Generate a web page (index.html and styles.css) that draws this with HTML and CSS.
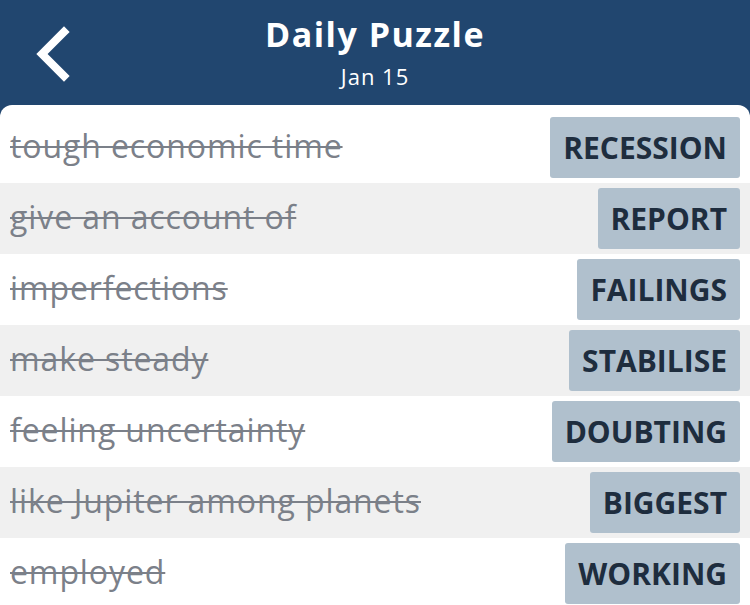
FILE: index.html
```html
<!DOCTYPE html>
<html lang="en">
<head>
    <meta charset="UTF-8">
    <meta name="viewport" content="width=device-width, initial-scale=1.0">
    <title>Daily Puzzle</title>
    <link rel="stylesheet" href="styles.css">
</head>
<body>
    <!-- Top Bar -->
    <header class="topbar">
        <a class="back-btn" href="#">
            <svg width="40" height="56" viewBox="0 0 40 56">
                <path d="M34 6 L12 28 L34 50" fill="none" stroke="#fff" stroke-width="8" stroke-linecap="square"/>
            </svg>
        </a>
        <div class="title-block">
            <h1>Daily Puzzle</h1>
            <div class="date">Jan 15</div>
        </div>
    </header>

    <!-- Clue List -->
    <main class="panel">
        <div class="row">
            <span class="clue">tough economic time</span>
            <span class="answer">RECESSION</span>
        </div>
        <div class="row">
            <span class="clue">give an account of</span>
            <span class="answer">REPORT</span>
        </div>
        <div class="row">
            <span class="clue">imperfections</span>
            <span class="answer">FAILINGS</span>
        </div>
        <div class="row">
            <span class="clue">make steady</span>
            <span class="answer">STABILISE</span>
        </div>
        <div class="row">
            <span class="clue">feeling uncertainty</span>
            <span class="answer">DOUBTING</span>
        </div>
        <div class="row">
            <span class="clue">like Jupiter among planets</span>
            <span class="answer">BIGGEST</span>
        </div>
        <div class="row">
            <span class="clue">employed</span>
            <span class="answer">WORKING</span>
        </div>
    </main>
</body>
</html>
```

FILE: styles.css
```css
/* General Page Styling */
body {
    margin: 0;
    font-family: "Open Sans", Lato, Arial, sans-serif;
    background: #21466f;
    height: 100vh;
    overflow: hidden;
}

/* Top Bar */
.topbar {
    height: 105px;
    display: flex;
    align-items: center;
    justify-content: center;
    position: relative;
    color: white;
}

.back-btn {
    position: absolute;
    left: 30px;
    top: 26px;
    display: block;
}

.title-block {
    text-align: center;
    margin-top: 0;
}

h1 {
    margin: 0;
    font-size: 34px;
    font-weight: bold;
    letter-spacing: 1.5px;
    line-height: 40px;
}

.date {
    font-size: 22px;
    letter-spacing: 1px;
    line-height: 30px;
    margin-top: 7px;
}

/* Clue List */
.panel {
    background: white;
    border-radius: 12px 12px 0 0;
    padding-top: 7px;
    height: calc(100vh - 112px);
    overflow: hidden;
}

.row {
    height: 71px;
    display: flex;
    align-items: center;
    justify-content: space-between;
    padding: 0 10px;
}

.row:nth-child(even) {
    background: #f0f0f0;
}

.clue {
    font-size: 32px;
    letter-spacing: 0.9px;
    color: #7b8089;
    text-decoration: line-through;
    text-decoration-thickness: 2px;
    margin-top: -5px;
}

.answer {
    background: #b0c0cd;
    color: #1e2d3e;
    font-size: 30px;
    font-weight: bold;
    height: 61px;
    line-height: 61px;
    padding: 0 13px;
    border-radius: 3px;
}
```
